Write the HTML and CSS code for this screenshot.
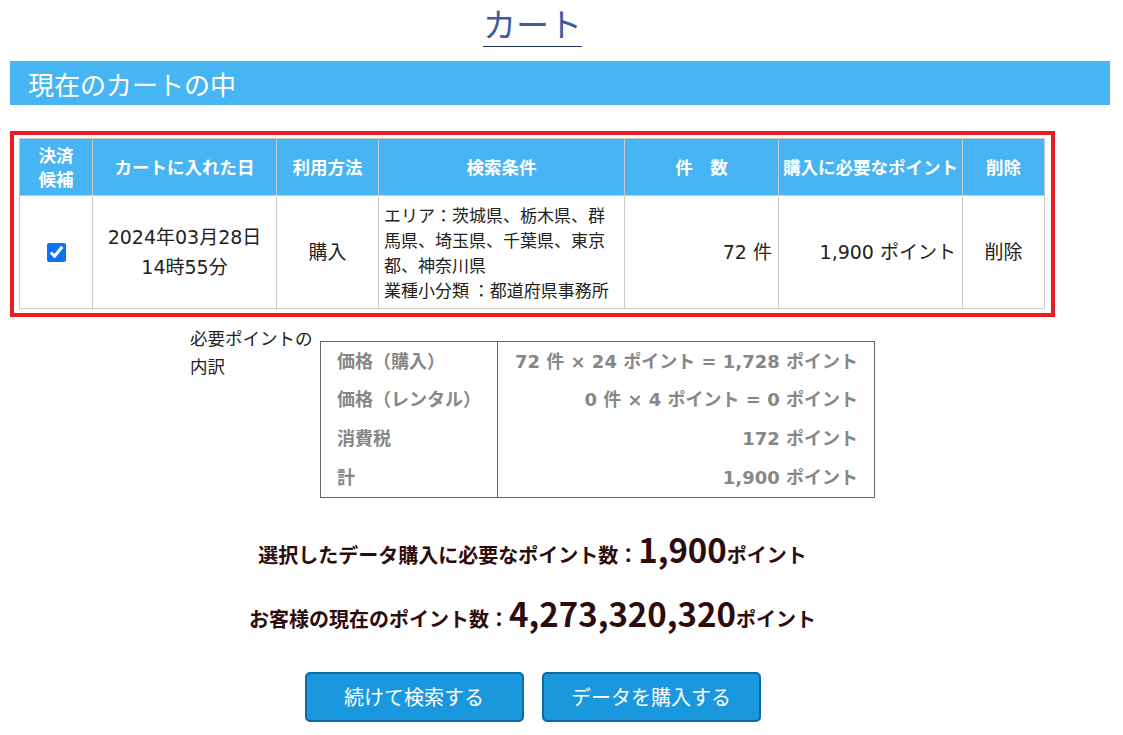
FILE: index.html
```html
<!DOCTYPE html>
<html lang="ja">
<head>
<meta charset="utf-8">
<title>カート</title>
<link rel="stylesheet" href="styles.css">
</head>
<body>
<div class="page">
  <div class="title-wrap"><h1 class="title">カート</h1></div>
  <h2 class="section-bar">現在のカートの中</h2>
  <div class="content">
    <div class="cart-box">
      <table class="cart">
        <colgroup>
          <col style="width:73px"><col style="width:184px"><col style="width:102px"><col style="width:246px"><col style="width:154px"><col style="width:184px"><col style="width:82px">
        </colgroup>
        <thead>
          <tr>
            <th>決済<br>候補</th>
            <th>カートに入れた日</th>
            <th>利用方法</th>
            <th>検索条件</th>
            <th>件　数</th>
            <th class="tight">購入に必要なポイント</th>
            <th>削除</th>
          </tr>
        </thead>
        <tbody>
          <tr>
            <td class="c"><input type="checkbox" class="chk" checked></td>
            <td class="c">2024年03月28日<br>14時55分</td>
            <td class="c">購入</td>
            <td class="cond">エリア：茨城県、栃木県、群馬県、埼玉県、千葉県、東京都、神奈川県<br>業種小分類 ：都道府県事務所</td>
            <td class="r">72 件</td>
            <td class="r">1,900 ポイント</td>
            <td class="c">削除</td>
          </tr>
        </tbody>
      </table>
    </div>

    <div class="breakdown">
      <div class="bd-label">必要ポイントの<br>内訳</div>
      <table class="bd-table">
        <tr><td class="bd-k">価格（購入）</td><td class="bd-v">72 件 × 24 ポイント = 1,728 ポイント</td></tr>
        <tr><td class="bd-k">価格（レンタル）</td><td class="bd-v">0 件 × 4 ポイント = 0 ポイント</td></tr>
        <tr><td class="bd-k">消費税</td><td class="bd-v">172 ポイント</td></tr>
        <tr><td class="bd-k">計</td><td class="bd-v">1,900 ポイント</td></tr>
      </table>
    </div>

    <div class="summary first">選択したデータ購入に必要なポイント数：<span class="num">1,900</span>ポイント</div>
    <div class="summary">お客様の現在のポイント数：<span class="num">4,273,320,320</span>ポイント</div>

    <div class="actions">
      <button class="btn">続けて検索する</button>
      <button class="btn">データを購入する</button>
    </div>
  </div>
</div>
</body>
</html>
```

FILE: styles.css
```css
* { box-sizing: border-box; }
html, body { margin: 0; padding: 0; background: #fff; }
body {
  font-family: "Noto Sans CJK JP", "Noto Sans", "Liberation Sans", sans-serif;
  color: #222;
}
.page { padding: 0 0 0 10px; width: 1110px; }

.title-wrap { width: 1045px; text-align: center; padding-top: 2px; }
.title {
  display: inline-block;
  margin: 0;
  font-size: 33px;
  font-weight: 400;
  line-height: 42px;
  color: #3f5c9c;
  border-bottom: 1px solid #1b2d58;
  padding: 0 0 2px;
}

.section-bar {
  margin: 14px 0 0;
  height: 44px;
  width: 1100px;
  background: #47b4f3;
  color: #fff;
  font-size: 26px;
  font-weight: 400;
  line-height: 46px;
  padding-left: 18px;
}

.content { width: 1045px; }

.cart-box {
  margin-top: 26px;
  border: 4px solid #ec1c24;
  padding: 3px 5px 4px 5px;
}
.cart {
  width: 1025px;
  table-layout: fixed;
  border-collapse: collapse;
}
.cart th, .cart td { border: 1px solid #c8c8c8; }
.cart th {
  background: #47b4f3;
  color: #fff;
  font-size: 17.5px;
  font-weight: 700;
  line-height: 24px;
  height: 57px;
  padding: 3px 2px;
  text-align: center;
}
.cart th.tight { padding: 0; white-space: nowrap; }
.cart td {
  font-family: "DejaVu Sans", "Noto Sans CJK JP", sans-serif;
  font-size: 19px;
  line-height: 30px;
  height: 113px;
  padding: 5px 6px;
  color: #222;
}
.cart td.c { text-align: center; }
.cart td.r { text-align: right; }
.cart td.cond {
  font-family: "Noto Sans CJK JP", sans-serif;
  font-size: 17px;
  padding: 5px 6px 5px 5px;
  line-height: 25px;
}
.chk { width: 19px; height: 19px; margin: 0; vertical-align: middle; accent-color: #0b74f5; position: relative; top: -1px; }

.breakdown {
  display: flex;
  justify-content: center;
  align-items: flex-start;
  margin-top: 7px;
}
.bd-label {
  font-size: 17.5px;
  line-height: 28px;
  width: 130px;
  color: #222;
}
.bd-table {
  margin-top: 17px;
  border-collapse: collapse;
  border: 1px solid #666;
  width: 555px;
}
.bd-table td {
  font-family: "DejaVu Sans", "Noto Sans CJK JP", sans-serif;
  font-size: 18px;
  font-weight: 700;
  color: #878787;
  height: 39px;
  padding: 0 16px;
  line-height: 24px;
}
.bd-table .bd-k { width: 177px; border-right: 1px solid #666; padding-left: 16px; }
.bd-table .bd-v { text-align: right; }
.bd-table tr:first-child td { padding-top: 1px; }

.summary {
  text-align: center;
  font-size: 20px;
  font-weight: 700;
  color: #2e0c0c;
  line-height: 40px;
  height: 40px;
  margin-top: 24px;
}
.summary.first { margin-top: 31px; }
.summary .num { font-size: 33px; }

.actions {
  display: flex;
  justify-content: center;
  gap: 18px;
  margin-top: 39px;
}
.btn {
  width: 219px;
  height: 50px;
  background: #1a98de;
  border: 2px solid #0f6a9f;
  border-radius: 5px;
  color: #fff;
  font-family: "Noto Sans CJK JP", "Noto Sans", sans-serif;
  font-size: 20px;
  padding: 0;
  line-height: 44px;
}
```
